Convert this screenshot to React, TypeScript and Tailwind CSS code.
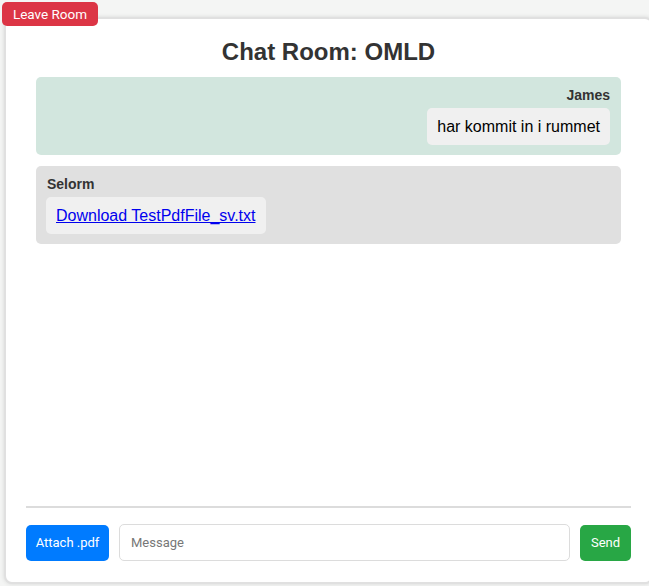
import React from 'react';

const sans = "font-['Liberation_Sans',Arial,sans-serif]";
const ui = "font-['Roboto','Liberation_Sans',sans-serif]";

export default function App() {
    return (
        <div className={`relative w-[649px] h-[586px] overflow-hidden bg-[#f4f5f4] ${sans}`}>
            <button className={`absolute left-[2px] top-[2px] z-10 w-[96px] h-[24px] rounded-[5px] bg-[#dc3545] text-white text-[13.5px] ${ui}`}>
                Leave Room
            </button>
            <div className="ml-[4px] mt-[17px] w-[649px] h-[567px] flex flex-col bg-white border-2 border-[#e0e0e0] rounded-[8px] shadow-[0_0_4px_rgba(0,0,0,0.12)] px-[20px]">
                <h2 className="pt-[19px] h-[58px] leading-[28px] text-center text-[24px] font-bold text-[#333]">
                    Chat Room: OMLD
                </h2>
                <div className="flex-1 flex flex-col gap-[11px] px-[10px]">
                    <div className="flex flex-col items-end bg-[#d2e6de] rounded-[5px] py-[10px] pl-[10px] pr-[11px]">
                        <div className="text-[14px] font-bold text-[#333] leading-[17px] mb-[4px]">James</div>
                        <div className="bg-[#f0f0f0] rounded-[5px] px-[10px] h-[37px] flex items-center text-[16px] text-black">
                            har kommit in i rummet
                        </div>
                    </div>
                    <div className="flex flex-col items-start bg-[#e0e0e0] rounded-[5px] py-[10px] px-[10px]">
                        <div className="text-[14px] font-bold text-[#333] leading-[17px] mb-[4px] pl-[1px]">Selorm</div>
                        <div className="bg-[#f0f0f0] rounded-[5px] px-[10px] h-[37px] flex items-center text-[16px]">
                            <a href="#" className="text-[#0000ee] underline">Download TestPdfFile_sv.txt</a>
                        </div>
                    </div>
                </div>
                <div className="h-[2px] bg-[#dcdcdc]" />
                <div className={`flex items-center gap-[10px] mt-[16px] mb-[21px] ${ui}`}>
                    <button className="w-[83px] h-[36px] rounded-[5px] bg-[#007bff] text-white text-[13px]">
                        Attach .pdf
                    </button>
                    <input
                        placeholder="Message"
                        className="flex-1 h-[37px] rounded-[5px] border border-[#dcdcdc] px-[11px] text-[13px] placeholder:text-[#777] outline-none"
                    />
                    <button className="w-[51px] h-[36px] rounded-[5px] bg-[#28a745] text-white text-[13px]">
                        Send
                    </button>
                </div>
            </div>
        </div>
    );
}
